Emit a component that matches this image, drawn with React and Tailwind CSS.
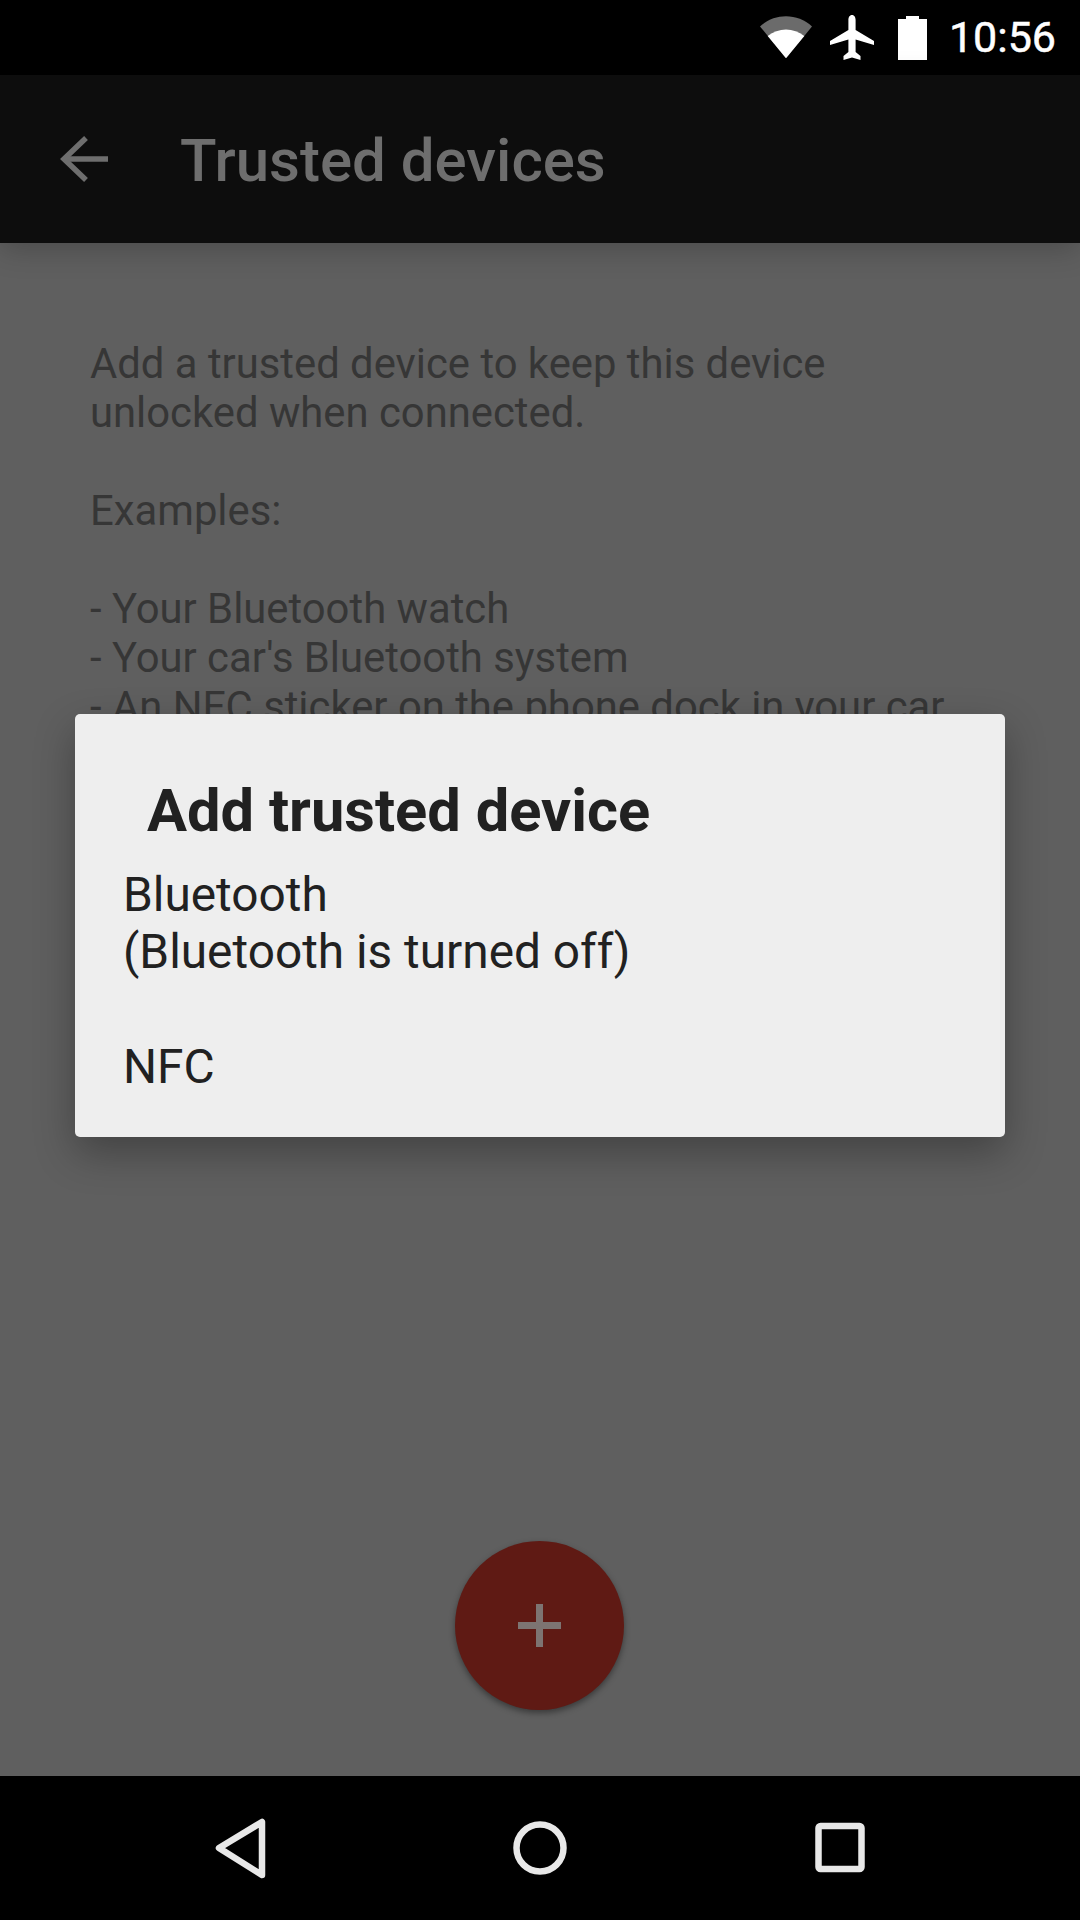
const roboto = "font-['Roboto',sans-serif]";

const StatusBar = () => (
  <div className="flex h-[75px] items-center justify-end bg-black pr-[24px]">
    {/* wifi */}
    <svg width="52" height="44" viewBox="0 0 54 44" className="mr-[18px] -mt-[2px]">
      <path d="M0 11 C15 -3 39 -3 54 11 L27 44 Z" fill="#6b6b6b" />
      <path d="M8 21 C19 12 35 12 46 21 L27 44 Z" fill="#fff" />
    </svg>
    {/* airplane */}
    <svg width="44" height="46" viewBox="0 0 44 46" className="mr-[24px]">
      <path
        d="M22 0 C24.5 0 25.6 2.5 25.6 5 L25.6 15 L44 26 L44 30 L25.6 24.5 L25.6 37 L30.5 41 L30.5 45 L22 42.5 L13.5 45 L13.5 41 L18.4 37 L18.4 24.5 L0 30 L0 26 L18.4 15 L18.4 5 C18.4 2.5 19.5 0 22 0 Z"
        fill="#fff"
      />
    </svg>
    {/* battery */}
    <svg width="29" height="44" viewBox="0 0 29 44" className="mr-[22px]">
      <path d="M8 0 H21 V3 H29 V44 H0 V3 H8 Z" fill="#fff" />
    </svg>
    <span className={`${roboto} text-[43px] leading-none text-white [-webkit-text-stroke:0.5px_white]`}>10:56</span>
  </div>
);

const AppBar = () => (
  <div className="z-10 flex h-[168px] items-center bg-[#0d0d0d] pl-[60px] shadow-[0_6px_28px_rgba(0,0,0,0.22)]">
    <svg width="48" height="48" viewBox="0 0 48 48" className="mr-[72px]" fill="none" stroke="#6e6e6e" strokeWidth="5.5">
      <path d="M48 24 H3" />
      <path d="M26 3 L4 24 L26 45" />
    </svg>
    <span className={`${roboto} pt-[3px] text-[60px] font-medium leading-none text-[#6e6e6e]`}>Trusted devices</span>
  </div>
);

const NavBar = () => (
  <div className="flex h-[144px] items-center justify-center bg-black">
    <svg width="1080" height="144" viewBox="0 0 1080 144" fill="none" stroke="#e8e8e8" strokeWidth="6.5" strokeLinejoin="round">
      <path d="M262 46 L262 99 L219 72 Z" />
      <circle cx="540" cy="72" r="23.5" />
      <rect x="818.5" y="50" width="43" height="43" rx="2" />
    </svg>
  </div>
);

const Dialog = () => (
  <div className={`${roboto} absolute left-[75px] top-[714px] h-[423px] w-[930px] rounded-[5px] bg-[#eeeeee] pl-[48px] pt-[64px] text-[#212121] shadow-[0_16px_40px_rgba(0,0,0,0.3)]`}>
    <h2 className="pl-[24px] text-[59.6px] font-bold leading-[66px]">Add trusted device</h2>
    <div className="mt-[23px] text-[47.8px] leading-[57px]">
      <p>Bluetooth</p>
      <p>(Bluetooth is turned off)</p>
    </div>
    <p className="mt-[58px] text-[47.8px] leading-[57px]">NFC</p>
  </div>
);

export default function App() {
  return (
    <div className="relative flex h-[1920px] w-[1080px] flex-col overflow-hidden bg-[#5f5f5f]">
      <StatusBar />
      <AppBar />
      <main className={`${roboto} flex-1 overflow-hidden pl-[90px] pt-[96px] text-[41.8px] leading-[49px] text-[#363636]`}>
        <p>Add a trusted device to keep this device</p>
        <p>unlocked when connected.</p>
        <p className="mt-[49px]">Examples:</p>
        <p className="mt-[49px]">- Your Bluetooth watch</p>
        <p>- Your car's Bluetooth system</p>
        <p>- An NFC sticker on the phone dock in your car</p>
      </main>
      <NavBar />
      <Dialog />
      {/* FAB */}
      <div className="absolute left-[455px] top-[1541px] flex h-[169px] w-[169px] items-center justify-center rounded-full bg-[#5f1a14] shadow-[0_3px_6px_rgba(0,0,0,0.4)]">
        <svg width="43" height="43" viewBox="0 0 43 43" fill="#7d7472">
          <rect x="18" y="0" width="7" height="43" />
          <rect x="0" y="18" width="43" height="7" />
        </svg>
      </div>
    </div>
  );
}
